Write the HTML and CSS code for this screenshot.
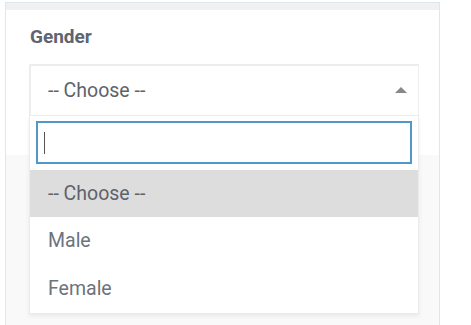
FILE: index.html
```html
<!DOCTYPE html>
<html>
<head>
<meta charset="utf-8">
<link rel="stylesheet" href="styles.css">
</head>
<body>
<div class="card">
  <div class="card-band"></div>
  <div class="panel">
    <div class="label">Gender</div>
    <div class="select-wrap">
      <div class="select">
        <span class="select-text">-- Choose --</span>
        <span class="arrow"></span>
      </div>
      <div class="dropdown">
        <div class="search-wrap">
          <div class="search"><span class="caret"></span></div>
        </div>
        <ul class="options">
          <li class="option active">-- Choose --</li>
          <li class="option">Male</li>
          <li class="option">Female</li>
        </ul>
      </div>
    </div>
  </div>
</div>
</body>
</html>
```
FILE: styles.css
```css
html, body {
  margin: 0;
  padding: 0;
  background: #ffffff;
  overflow: hidden;
  font-family: Roboto, "Liberation Sans", sans-serif;
}

.card {
  margin: 2px 0 0 5px;
  width: 433px;
  height: 322px;
  border: 1px solid #dce7f0;
  border-bottom: none;
  background: #f9f9f9;
}

.card-band {
  height: 7px;
  background: #f1f1f1;
}

.panel {
  background: #ffffff;
  height: 145px;
  padding: 16px 0 0 23px;
  box-sizing: border-box;
}

.label {
  font-size: 19px;
  line-height: 22px;
  font-weight: 700;
  color: #5d6571;
  padding-left: 1px;
  margin-bottom: 16px;
}

.select-wrap {
  position: relative;
  width: 390px;
}

.select {
  height: 52px;
  box-sizing: border-box;
  border: 2px solid #ededed;
  border-bottom: 1px solid #ededed;
  border-right-width: 1px;
  display: flex;
  align-items: center;
  justify-content: space-between;
  padding: 0 11px 0 17px;
  background: #ffffff;
}

.select-text {
  font-size: 19.5px;
  color: #5d636b;
}

.arrow {
  width: 0;
  height: 0;
  border-left: 6px solid transparent;
  border-right: 6px solid transparent;
  border-bottom: 6px solid #888888;
  margin-top: -1px;
}

.dropdown {
  position: absolute;
  top: 100%;
  left: 0;
  right: 0;
  background: #ffffff;
  border: 1px solid #ececec;
  border-top: none;
  box-shadow: 0 2px 4px rgba(0, 0, 0, 0.07);
}

.search-wrap {
  padding: 5px 6px 6px 6px;
}

.search {
  height: 43px;
  box-sizing: border-box;
  border: 2px solid #4f98c9;
  display: flex;
  align-items: center;
  padding-left: 6px;
}

.caret {
  width: 1px;
  height: 22px;
  background: #555555;
}

.options {
  list-style: none;
  margin: 0;
  padding: 0;
}

.option {
  height: 48px;
  line-height: 48px;
  padding-left: 18px;
  font-size: 19.5px;
  color: #6c737d;
}

.option.active {
  height: 47px;
  line-height: 47px;
  background: #dddddd;
  color: #5d636b;
}
```
